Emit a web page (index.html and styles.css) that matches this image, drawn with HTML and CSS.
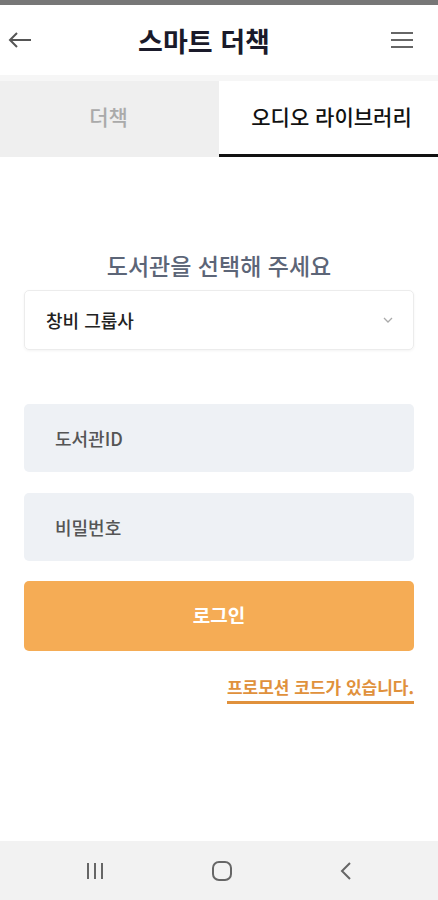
FILE: index.html
```html
<!DOCTYPE html>
<html lang="ko">
<head>
    <meta charset="UTF-8">
    <meta name="viewport" content="width=device-width, initial-scale=1.0">
    <title>스마트 더책</title>
    <link rel="stylesheet" href="styles.css">
</head>
<body>

    <!-- Status strip -->
    <div class="status-bar"></div>

    <!-- Header -->
    <header class="app-header">
        <button class="icon-button" aria-label="뒤로">
            <svg width="24" height="16" viewBox="0 0 24 16">
                <path d="M23 8H2M9 1L2 8l7 7" fill="none" stroke="#555" stroke-width="2"/>
            </svg>
        </button>
        <h1 class="app-title">스마트 더책</h1>
        <button class="icon-button" aria-label="메뉴">
            <svg width="24" height="18" viewBox="0 0 24 18">
                <path d="M1 2h22M1 9h22M1 16h22" fill="none" stroke="#666" stroke-width="2"/>
            </svg>
        </button>
    </header>

    <!-- Tabs -->
    <nav class="tabs">
        <div class="tab">더책</div>
        <div class="tab active">오디오 라이브러리</div>
    </nav>

    <!-- Login Form -->
    <main class="login-container">
        <h2 class="login-title">도서관을 선택해 주세요</h2>

        <div class="select-box">
            <span>창비 그룹사</span>
            <svg width="10" height="6" viewBox="0 0 10 6">
                <path d="M1 1l4 4 4-4" fill="none" stroke="#aaa" stroke-width="1.3"/>
            </svg>
        </div>

        <div class="input-field">도서관ID</div>
        <div class="input-field">비밀번호</div>

        <button class="login-button">로그인</button>

        <div class="promo-row">
            <a class="promo-link">프로모션 코드가 있습니다.</a>
        </div>
    </main>

    <!-- Android nav bar -->
    <footer class="nav-bar">
        <svg width="20" height="18" viewBox="0 0 20 18">
            <path d="M3 1v16M10 1v16M17 1v16" stroke="#666" stroke-width="2"/>
        </svg>
        <svg width="22" height="22" viewBox="0 0 22 22">
            <rect x="2" y="2" width="18" height="18" rx="6" fill="none" stroke="#666" stroke-width="2"/>
        </svg>
        <svg width="14" height="20" viewBox="0 0 14 20">
            <path d="M11 2L3 10l8 8" fill="none" stroke="#666" stroke-width="2"/>
        </svg>
    </footer>

</body>
</html>
```

FILE: styles.css
```css
body {
    margin: 0;
    width: 438px;
    height: 900px;
    display: flex;
    flex-direction: column;
    background-color: white;
    font-family: "Noto Sans CJK KR", "Noto Sans", sans-serif;
}

.status-bar {
    height: 5px;
    background-color: #777;
}

.app-header {
    height: 70px;
    display: flex;
    align-items: center;
    justify-content: space-between;
    padding: 0 24px 0 8px;
    border-bottom: 6px solid #f6f6f6;
}

.icon-button {
    background: none;
    border: none;
    padding: 0;
    display: flex;
}

.app-title {
    margin: 0 14px 0 0;
    font-size: 27px;
    font-weight: 700;
    color: #1a1a2a;
}

/* Tabs */
.tabs {
    display: flex;
    height: 76px;
}

.tab {
    width: 50%;
    box-sizing: border-box;
    display: flex;
    align-items: center;
    justify-content: center;
    padding: 0 2px 6px 0;
    background-color: #efefef;
    color: #aaa;
    font-size: 21px;
    font-weight: 500;
}

.tab.active {
    background-color: white;
    color: #111;
    border-bottom: 3px solid #111;
    padding: 0 0 3px 6px;
}

/* Form */
.login-container {
    flex: 1;
    padding: 0 24px 0 24px;
    display: flex;
    flex-direction: column;
}

.login-title {
    margin: 93px 0 10px;
    text-align: center;
    font-size: 23px;
    font-weight: 500;
    color: #5c6577;
    line-height: 30px;
}

.select-box {
    height: 58px;
    display: flex;
    align-items: center;
    justify-content: space-between;
    padding: 0 20px 0 21px;
    border: 1px solid #ececec;
    border-radius: 5px;
    box-shadow: 0 1px 3px rgba(0, 0, 0, 0.05);
    font-size: 18px;
    font-weight: 500;
    color: #222;
}

.input-field {
    height: 68px;
    display: flex;
    align-items: center;
    padding: 0 31px;
    margin-top: 54px;
    background-color: #eef1f5;
    border-radius: 5px;
    font-size: 18px;
    font-weight: 500;
    color: #555;
}

.input-field + .input-field {
    margin-top: 21px;
}

.login-button {
    height: 70px;
    margin-top: 20px;
    border: none;
    border-radius: 5px;
    background-color: #f5ac55;
    color: white;
    font-family: inherit;
    font-size: 19px;
    font-weight: 700;
    padding-bottom: 4px;
}

.promo-row {
    display: flex;
    justify-content: flex-end;
    margin-top: 24px;
}

.promo-link {
    font-size: 17px;
    font-weight: 700;
    color: #e0913c;
    line-height: 24px;
    padding-bottom: 2px;
    border-bottom: 3px solid #e0913c;
}

/* Bottom nav */
.nav-bar {
    height: 59px;
    display: flex;
    align-items: center;
    justify-content: center;
    gap: 106px;
    background-color: #f2f2f2;
}
```
